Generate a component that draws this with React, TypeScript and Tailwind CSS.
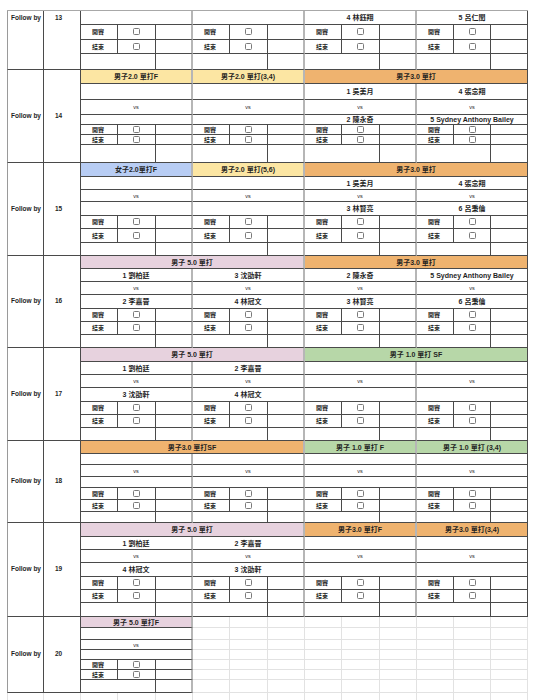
import React from 'react';

type Kind = 'header' | 'name1' | 'vs' | 'name2' | 'start' | 'end' | 'bottom';
type Seg = { start: number; span: number; text: string; bg: string };

interface Block {
  n: number;
  kinds: Kind[];
  hs: string[];
  segs: Seg[];
  names: [string, string][];
  present: boolean[];
  top?: boolean;
}

const Y = 'bg-[#fce6a3]';
const O = 'bg-[#efb36f]';
const B = 'bg-[#b8cdf4]';
const P = 'bg-[#e7d2de]';
const G = 'bg-[#b7d7a8]';

const FULL: Kind[] = ['header', 'name1', 'vs', 'name2', 'start', 'end', 'bottom'];
const E: [string, string] = ['', ''];
const ALL = [true, true, true, true];

const blocks: Block[] = [
  {
    n: 13,
    kinds: ['name2', 'start', 'end', 'bottom'],
    hs: ['h-[14px]', 'h-[15px]', 'h-[14px]', 'h-[16px]'],
    segs: [],
    names: [E, E, ['', '4 林鈺翔'], ['', '5 呂仁閏']],
    present: ALL,
    top: true,
  },
  {
    n: 14,
    kinds: FULL,
    hs: ['h-[14px]', 'h-[16px]', 'h-[15px]', 'h-[10px]', 'h-[10px]', 'h-[10px]', 'h-[18px]'],
    segs: [
      { start: 0, span: 1, text: '男子2.0 單打F', bg: Y },
      { start: 1, span: 1, text: '男子2.0 單打(3,4)', bg: Y },
      { start: 2, span: 2, text: '男子3.0 單打', bg: O },
    ],
    names: [E, E, ['1 吳美月', '2 陳永奇'], ['4 張念翔', '5 Sydney Anthony Bailey']],
    present: ALL,
  },
  {
    n: 15,
    kinds: FULL,
    hs: ['h-[14px]', 'h-[13px]', 'h-[12px]', 'h-[14px]', 'h-[13px]', 'h-[14px]', 'h-[13px]'],
    segs: [
      { start: 0, span: 1, text: '女子2.0單打F', bg: B },
      { start: 1, span: 1, text: '男子2.0 單打(5,6)', bg: Y },
      { start: 2, span: 2, text: '男子3.0 單打', bg: O },
    ],
    names: [E, E, ['1 吳美月', '3 林賢亮'], ['4 張念翔', '6 呂秉倫']],
    present: ALL,
  },
  {
    n: 16,
    kinds: FULL,
    hs: ['h-[13px]', 'h-[13px]', 'h-[13px]', 'h-[14px]', 'h-[13px]', 'h-[13px]', 'h-[13px]'],
    segs: [
      { start: 0, span: 2, text: '男子 5.0 單打', bg: P },
      { start: 2, span: 2, text: '男子3.0 單打', bg: O },
    ],
    names: [
      ['1 劉柏廷', '2 李嘉晉'],
      ['3 沈劭軒', '4 林冠文'],
      ['2 陳永奇', '3 林賢亮'],
      ['5 Sydney Anthony Bailey', '6 呂秉倫'],
    ],
    present: ALL,
  },
  {
    n: 17,
    kinds: FULL,
    hs: ['h-[14px]', 'h-[13px]', 'h-[13px]', 'h-[14px]', 'h-[13px]', 'h-[13px]', 'h-[13px]'],
    segs: [
      { start: 0, span: 2, text: '男子 5.0 單打', bg: P },
      { start: 2, span: 2, text: '男子 1.0 單打 SF', bg: G },
    ],
    names: [['1 劉柏廷', '3 沈劭軒'], ['2 李嘉晉', '4 林冠文'], E, E],
    present: ALL,
  },
  {
    n: 18,
    kinds: FULL,
    hs: ['h-[13px]', 'h-[11px]', 'h-[12px]', 'h-[11px]', 'h-[12px]', 'h-[12px]', 'h-[11px]'],
    segs: [
      { start: 0, span: 2, text: '男子3.0 單打SF', bg: O },
      { start: 2, span: 1, text: '男子 1.0 單打 F', bg: G },
      { start: 3, span: 1, text: '男子 1.0 單打 (3,4)', bg: G },
    ],
    names: [E, E, E, E],
    present: ALL,
  },
  {
    n: 19,
    kinds: FULL,
    hs: ['h-[14px]', 'h-[13px]', 'h-[13px]', 'h-[14px]', 'h-[13px]', 'h-[13px]', 'h-[14px]'],
    segs: [
      { start: 0, span: 2, text: '男子 5.0 單打', bg: P },
      { start: 2, span: 1, text: '男子3.0 單打F', bg: O },
      { start: 3, span: 1, text: '男子3.0 單打(3,4)', bg: O },
    ],
    names: [['1 劉柏廷', '4 林冠文'], ['2 李嘉晉', '3 沈劭軒'], E, E],
    present: ALL,
  },
  {
    n: 20,
    kinds: FULL,
    hs: ['h-[11px]', 'h-[12px]', 'h-[10px]', 'h-[10px]', 'h-[10px]', 'h-[10px]', 'h-[13px]'],
    segs: [{ start: 0, span: 1, text: '男子 5.0 單打F', bg: P }],
    names: [E, E, E, E],
    present: [true, false, false, false],
  },
];

const MATCH_W = ['w-[112px]', 'w-[112px]', 'w-[112px]', 'w-[111px]'];
const SEG_W: Record<string, string> = {
  '0-1': 'w-[112px]',
  '1-1': 'w-[112px]',
  '2-1': 'w-[112px]',
  '3-1': 'w-[111px]',
  '0-2': 'w-[224px]',
  '2-2': 'w-[223px]',
};
const SUB1 = ['w-[37px]', 'w-[37px]', 'w-[37px]', 'w-[37px]'];
const SUB2 = ['w-[38px]', 'w-[38px]', 'w-[38px]', 'w-[37px]'];
const BOT1 = ['w-[75px]', 'w-[75px]', 'w-[75px]', 'w-[74px]'];

const LINE = 'border-[#4a4a4a]';
const SEP = 'border-r-2 border-r-[#b6b6b6]';

function rightBorder(m: number) {
  return m < 3 ? SEP : `border-r ${LINE}`;
}

function Checkbox() {
  return <span className="block w-[7px] h-[7px] rounded-[1.5px] border border-[#7a7a7a] bg-white" />;
}

function BlankMatch({ m, h }: { m: number; h: string }) {
  return (
    <div className={`${MATCH_W[m]} ${h} flex border-r border-b border-[#e2e2e2]`}>
      <div className={`${SUB1[m]} border-r border-[#e2e2e2]`} />
      <div className={`${SUB2[m]} border-r border-[#e2e2e2]`} />
      <div className="flex-1" />
    </div>
  );
}

function MatchCell({ m, kind, h, names }: { m: number; kind: Kind; h: string; names: [string, string] }) {
  const base = `${MATCH_W[m]} ${h} flex border-b ${LINE} ${rightBorder(m)}`;
  if (kind === 'name1' || kind === 'name2') {
    const t = kind === 'name1' ? names[0] : names[1];
    return (
      <div className={`${base} items-center justify-center text-[7px] font-semibold leading-none whitespace-nowrap`}>
        {t}
      </div>
    );
  }
  if (kind === 'vs') {
    return (
      <div className={`${base} items-center justify-center text-[5.5px] leading-none pt-[2px]`}>vs</div>
    );
  }
  if (kind === 'start' || kind === 'end') {
    return (
      <div className={base}>
        <div className={`${SUB1[m]} border-r ${LINE} flex items-center pl-[11px] text-[6px] font-semibold leading-none`}>
          {kind === 'start' ? '開賽' : '結束'}
        </div>
        <div className={`${SUB2[m]} border-r ${LINE} flex items-center justify-center pb-[1px]`}>
          <Checkbox />
        </div>
        <div className="flex-1" />
      </div>
    );
  }
  return (
    <div className={base}>
      <div className={`${BOT1[m]} border-r ${LINE}`} />
      <div className="flex-1" />
    </div>
  );
}

function HeaderRow({ b, h }: { b: Block; h: string }) {
  const cells: React.ReactNode[] = [];
  let m = 0;
  while (m < 4) {
    const seg = b.segs.find((s) => s.start === m);
    if (seg) {
      const last = seg.start + seg.span - 1;
      cells.push(
        <div
          key={m}
          className={`${SEG_W[`${seg.start}-${seg.span}`]} ${h} ${seg.bg} border-b ${LINE} ${rightBorder(last)} flex items-center justify-center text-[7px] font-bold leading-none whitespace-nowrap`}
        >
          {seg.text}
        </div>
      );
      m += seg.span;
    } else if (!b.present[m]) {
      cells.push(<BlankMatch key={m} m={m} h={h} />);
      m += 1;
    } else {
      cells.push(<div key={m} className={`${MATCH_W[m]} ${h} border-b ${LINE} ${rightBorder(m)}`} />);
      m += 1;
    }
  }
  return <div className="flex">{cells}</div>;
}

function BlockView({ b }: { b: Block }) {
  return (
    <div className="flex">
      <div
        className={`w-[37px] shrink-0 border-l border-l-[#9a9a9a] border-r border-b ${LINE} flex ${
          b.top ? 'items-start pt-[4px]' : 'items-center'
        } pl-[3px] text-[6.5px] font-bold leading-none whitespace-nowrap`}
      >
        Follow by
      </div>
      <div
        className={`w-[37px] shrink-0 border-r border-b ${LINE} flex ${
          b.top ? 'items-start pt-[4px]' : 'items-center'
        } pl-[11px] text-[6.5px] font-bold leading-none`}
      >
        {b.n}
      </div>
      <div className="flex flex-col">
        {b.kinds.map((k, i) =>
          k === 'header' ? (
            <HeaderRow key={i} b={b} h={b.hs[i]} />
          ) : (
            <div key={i} className="flex">
              {[0, 1, 2, 3].map((m) =>
                b.present[m] ? (
                  <MatchCell key={m} m={m} kind={k} h={b.hs[i]} names={b.names[m]} />
                ) : (
                  <BlankMatch key={m} m={m} h={b.hs[i]} />
                )
              )}
            </div>
          )
        )}
      </div>
    </div>
  );
}

export default function App() {
  return (
    <div className="w-[533px] h-[700px] overflow-hidden bg-white text-[#1f1f1f] font-['Liberation_Sans','Noto_Sans_CJK_TC',sans-serif] pt-[10px] pl-[7px]">
      <div className="w-[521px] border-t border-t-[#a8a8a8]">
        {blocks.map((b) => (
          <BlockView key={b.n} b={b} />
        ))}
        <div className="flex h-[10px]">
          <div className="w-[37px] border-l border-r border-[#e2e2e2]" />
          <div className="w-[37px] border-r border-[#e2e2e2]" />
          {[0, 1, 2, 3].map((m) => (
            <div key={m} className={`${MATCH_W[m]} flex border-r border-[#e2e2e2]`}>
              <div className={`${SUB1[m]} border-r border-[#e2e2e2]`} />
              <div className={`${SUB2[m]} border-r border-[#e2e2e2]`} />
              <div className="flex-1" />
            </div>
          ))}
        </div>
      </div>
    </div>
  );
}
